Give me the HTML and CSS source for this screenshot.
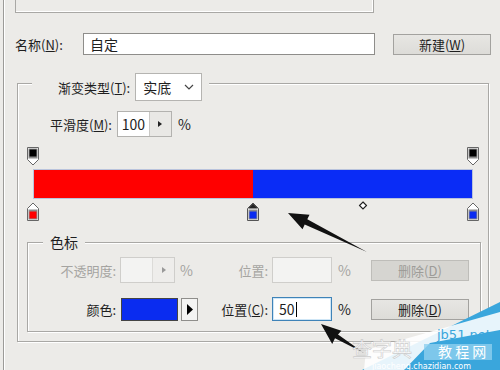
FILE: index.html
```html
<!DOCTYPE html>
<html lang="zh-CN">
<head>
    <meta charset="UTF-8">
    <title>渐变编辑器</title>
    <link rel="stylesheet" href="styles.css">
</head>
<body>

<div class="window">
    <div class="preset-box"></div>

    <div class="name-row">
        <label class="name-label">名称(<u>N</u>):</label>
        <div class="text-field name-field">自定</div>
        <button class="btn new-btn">新建(<u>W</u>)</button>
    </div>

    <div class="group">
        <div class="group-head">
            <span>渐变类型(<u>T</u>):</span>
            <div class="select">
                <span>实底</span>
                <svg class="chevron" width="10" height="6" viewBox="0 0 10 6"><path d="M1 1l4 4 4-4" fill="none" stroke="#444" stroke-width="1.2"/></svg>
            </div>
        </div>

        <div class="smooth-row">
            <span>平滑度(<u>M</u>):</span>
            <div class="spin">
                <span class="spin-value">100</span>
                <span class="spin-arrow"><svg width="4" height="6" viewBox="0 0 4 6"><path d="M0 0l4 3-4 3z" fill="#222"/></svg></span>
            </div>
            <span class="unit">%</span>
        </div>

        <div class="ramp">
            <div class="stops">
                <svg class="stop" style="left:0%" width="12" height="19" viewBox="0 0 12 19">
                    <path d="M0.5 0.5h11v12l-5.5 5.5-5.5-5.5z" fill="#fff" stroke="#666"/>
                    <rect x="1.5" y="1.5" width="9" height="10" fill="#8c8c8c"/>
                    <rect x="2.5" y="2.5" width="7" height="7" fill="#000"/>
                </svg>
                <svg class="stop" style="left:100%" width="12" height="19" viewBox="0 0 12 19">
                    <path d="M0.5 0.5h11v12l-5.5 5.5-5.5-5.5z" fill="#fff" stroke="#666"/>
                    <rect x="1.5" y="1.5" width="9" height="10" fill="#8c8c8c"/>
                    <rect x="2.5" y="2.5" width="7" height="7" fill="#000"/>
                </svg>
            </div>
            <div class="bar"></div>
            <div class="stops">
                <svg class="stop" style="left:0%" width="12" height="19" viewBox="0 0 12 19">
                    <path d="M0.5 18.5h11v-12l-5.5-5.5-5.5 5.5z" fill="#fff" stroke="#666"/>
                    <rect x="1.5" y="7.5" width="9" height="10" fill="#8c8c8c"/>
                    <rect x="2.5" y="9.5" width="7" height="7" fill="#f00"/>
                </svg>
                <svg class="stop" style="left:50%" width="12" height="19" viewBox="0 0 12 19">
                    <path d="M0.5 18.5h11v-12l-5.5-5.5-5.5 5.5z" fill="#fff" stroke="#555"/>
                    <path d="M6 1.5l5 5h-10z" fill="#222"/>
                    <rect x="1.5" y="7.5" width="9" height="10" fill="#8c8c8c"/>
                    <rect x="2.5" y="9.5" width="7" height="7" fill="#0a2cf0"/>
                </svg>
                <svg class="midpoint" style="left:75%" width="9" height="9" viewBox="0 0 9 9">
                    <path d="M4.5 1l3.5 3.5-3.5 3.5-3.5-3.5z" fill="#fff" stroke="#222" stroke-width="1.2"/>
                </svg>
                <svg class="stop" style="left:100%" width="12" height="19" viewBox="0 0 12 19">
                    <path d="M0.5 18.5h11v-12l-5.5-5.5-5.5 5.5z" fill="#fff" stroke="#666"/>
                    <rect x="1.5" y="7.5" width="9" height="10" fill="#8c8c8c"/>
                    <rect x="2.5" y="9.5" width="7" height="7" fill="#0a2cf0"/>
                </svg>
            </div>
        </div>

        <div class="group inner">
            <div class="legend">色标</div>
            <div class="stop-grid">
                <span class="cell-label disabled">不透明度:</span>
                <div class="cell-control">
                    <div class="spin off">
                        <span class="spin-value"></span>
                        <span class="spin-arrow"><svg width="4" height="6" viewBox="0 0 4 6"><path d="M0 0l4 3-4 3z" fill="#999"/></svg></span>
                    </div>
                    <span class="unit disabled">%</span>
                </div>
                <span class="cell-label disabled">位置:</span>
                <div class="cell-field"><div class="text-field pos-field off"></div></div>
                <span class="cell-unit disabled">%</span>
                <button class="btn del-btn" disabled>删除(<u>D</u>)</button>

                <span class="cell-label">颜色:</span>
                <div class="cell-control">
                    <div class="swatch"></div>
                    <div class="swatch-menu"><svg width="6" height="11" viewBox="0 0 6 11"><path d="M0 0l6 5.5-6 5.5z" fill="#000"/></svg></div>
                </div>
                <span class="cell-label">位置(<u>C</u>):</span>
                <div class="cell-field"><div class="text-field pos-field focus">50<span class="caret"></span></div></div>
                <span class="cell-unit">%</span>
                <button class="btn del-btn">删除(<u>D</u>)</button>
            </div>
        </div>
    </div>
</div>

<svg class="notes" width="500" height="370" viewBox="0 0 500 370">
    <path d="M288 213l21.5 1.8-2.2 4.5 59.7 32.7-62.3-27.5-2.2 4.7z" fill="#111"/>
    <path d="M321 324l20.4 6.7-3.4 3.9 26 18.4-29-14.8-2.8 5.7z" fill="#111"/>
    <polygon points="362,370 500,302 500,370" fill="#3aa6dc"/>
    <polygon points="366,350 500,312 500,330 430,343 404,370 364,370" fill="#fff" opacity="0.88"/>
    <rect x="424" y="344" width="68" height="16" fill="#8fd0ef" opacity="0.8"/>
    <text x="437" y="339" class="wm-site">jb51.net</text>
    <text x="438" y="357" class="wm-cn">教 程 网</text>
    <text x="352" y="357" class="wm-big">查字典</text>
    <text x="372" y="369" class="wm-url">jiaocheng.chazidian.com</text>
</svg>

</body>
</html>
```

FILE: styles.css
```css
html, body { margin: 0; padding: 0; }
body { width: 500px; height: 370px; overflow: hidden; background: #ecebe8; font: 13px/1 "Noto Sans CJK SC", "Liberation Sans", sans-serif; color: #1e1e1e; position: relative; }
u { text-decoration: underline; text-underline-offset: 1px; }

.window { margin-left: 3px; height: 370px; border-left: 1px solid #9c9b98; box-shadow: inset 1px 0 0 #fff; padding-left: 11px; box-sizing: border-box; }

.preset-box { width: 359px; height: 13px; box-sizing: border-box; border: 1px solid #a9a8a5; border-top: none; box-shadow: inset -1px -1px 0 #fff; }

.name-row { display: flex; align-items: center; margin-top: 20px; height: 22px; }
.name-label { width: 68px; }
.text-field { box-sizing: border-box; background: #fff; border: 1px solid #8e8d8a; display: flex; align-items: center; padding-left: 6px; }
.name-field { width: 292px; height: 22px; font-size: 14px; }
.btn { font: inherit; color: #1e1e1e; box-sizing: border-box; height: 21px; border: 1px solid #a3a29f; background: linear-gradient(#e7e6e3, #dddcd8); padding: 0; }
.new-btn { width: 98px; margin-left: 18px; }

.group { box-sizing: border-box; border: 1px solid #a9a8a5; box-shadow: inset 1px 1px 0 #fff, 1px 1px 0 #fff; }
.window > .group { margin: 28px 0 0 2px; width: 472px; height: 259px; padding-bottom: 9px; }

.group-head { display: flex; align-items: center; width: fit-content; height: 28px; margin: -11px 0 0 14px; padding: 0 7px 0 26px; background: #ecebe8; }
.select { display: flex; align-items: center; justify-content: space-between; box-sizing: border-box; width: 67px; height: 28px; margin-left: 5px; padding: 0 7px 0 7px; background: #fff; border: 1px solid #b5b4b1; font-size: 14px; }

.smooth-row { display: flex; align-items: center; height: 26px; margin: 10px 0 0 32px; }
.spin { display: flex; box-sizing: border-box; width: 55px; height: 26px; margin-left: 5px; border: 1px solid #b3b2af; background: #fff; }
.spin-value { width: 31px; display: flex; align-items: center; justify-content: center; border-right: 1px solid #c9c8c5; font-size: 14px; }
.spin-arrow { flex: 1; display: flex; align-items: center; justify-content: center; background: #e9e8e5; }
.unit { margin-left: 6px; font-size: 14px; }
.spin.off { margin-left: 2px; border-color: #cfcecb; background: #f3f3f2; }
.spin.off .spin-value { border-right-color: #dcdbd8; }
.spin.off .spin-arrow { background: #eeedeb; }

.ramp { width: 440px; margin-left: 15px; }
.stops { position: relative; height: 19px; margin-top: 10px; }
.stops + .bar { margin-top: 3px; }
.bar + .stops { margin-top: 3px; }
.stop { position: absolute; top: 0; transform: translateX(-50%); }
.midpoint { position: absolute; top: -1px; transform: translateX(-50%); }
.bar { height: 30px; box-sizing: border-box; border: 1px solid #b9c3dc; background: linear-gradient(90deg, #ff0000 0 50%, #0a2cf6 50% 100%); }

.group.inner { margin: 21px 0 0 9px; width: 454px; padding-bottom: 10px; }
.legend { width: fit-content; margin: -9px 0 0 15px; padding: 0 7px; line-height: 17px; font-size: 14px; background: #ecebe8; }

.stop-grid { display: grid; grid-template-columns: 90px 80px 72px 62px 39px 98px; grid-template-rows: 26px 24px; row-gap: 14px; margin-top: 6px; align-items: center; }
.cell-label { text-align: right; padding-right: 2px; }
.cell-control { display: flex; align-items: center; height: 100%; }
.cell-field { padding-left: 2px; height: 100%; display: flex; align-items: center; }
.cell-unit { padding-left: 6px; font-size: 14px; }
.disabled { color: #a5a4a1; }
.unit.disabled { margin-left: 5px; }

.pos-field { width: 60px; height: 26px; }
.pos-field.off { border-color: #cfcecb; background: #f3f3f2; }
.pos-field.focus { height: 24px; border-color: #3f83b8; box-shadow: inset 0 0 0 1px #cfe6f6; font-size: 14px; }
.caret { width: 1px; height: 15px; background: #000; margin-left: 1px; }

.del-btn { width: 98px; }
.del-btn[disabled] { background: #d6d5d1; border-color: #bebdb9; color: #9d9c98; height: 21px; }

.swatch { width: 57px; height: 23px; margin-left: 3px; box-sizing: border-box; border: 1px solid #444; background: #0a2cf0; }
.swatch-menu { width: 17px; height: 23px; margin-left: 3px; box-sizing: border-box; border: 1px solid #8f8e8b; background: #f4f4f3; display: flex; align-items: center; justify-content: center; }

.notes { position: absolute; left: 0; top: 0; pointer-events: none; }
.wm-site { font: 13px "DejaVu Sans", sans-serif; fill: #3aa6dc; }
.wm-cn { font: 14px "Noto Sans CJK SC", sans-serif; fill: #fff; }
.wm-big { font: 20px "Noto Sans CJK SC", sans-serif; fill: #fff; stroke: #c8c8c8; stroke-width: 0.6; opacity: 0.9; }
.wm-url { font: 8px "DejaVu Sans", sans-serif; fill: #fff; }
```
